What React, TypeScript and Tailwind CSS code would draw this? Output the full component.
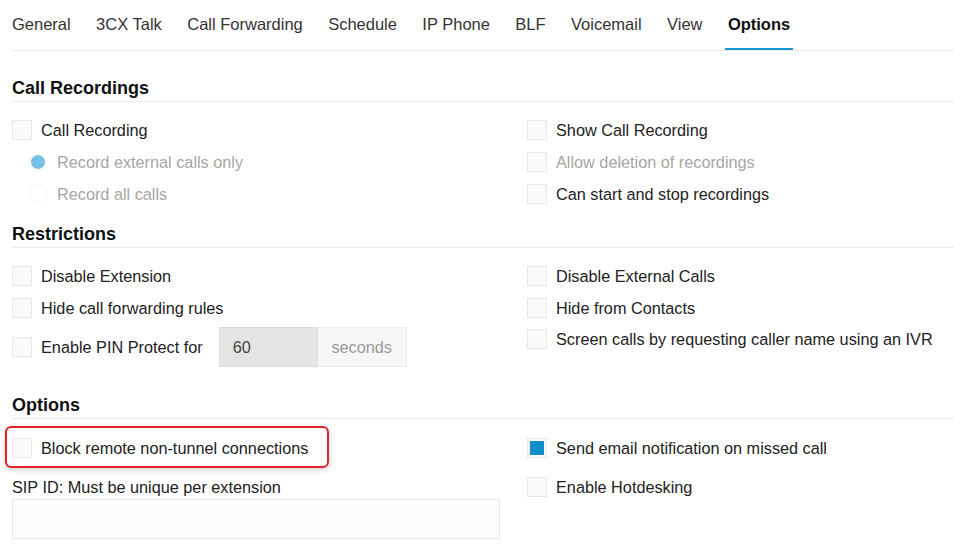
import React from 'react'

const tabs = ['General', '3CX Talk', 'Call Forwarding', 'Schedule', 'IP Phone', 'BLF', 'Voicemail', 'View', 'Options']

function Checkbox({ checked = false }: { checked?: boolean }) {
  return (
    <span className="flex h-5 w-5 shrink-0 items-center justify-center border border-[#e8e8e8] bg-[#fafafa]">
      {checked && <span className="h-[14px] w-[14px] bg-[#0f8fce]" />}
    </span>
  )
}

function CheckRow({
  label,
  checked,
  disabled,
  className = '',
}: {
  label: string
  checked?: boolean
  disabled?: boolean
  className?: string
}) {
  return (
    <label className={`flex h-8 items-center ${className}`}>
      <Checkbox checked={checked} />
      <span className={`ml-[9px] whitespace-nowrap ${disabled ? 'text-[#a6a6a6]' : 'text-[#222]'}`}>{label}</span>
    </label>
  )
}

function RadioRow({ label, checked }: { label: string; checked?: boolean }) {
  return (
    <label className="flex h-8 items-center pl-[17px]">
      <span className="flex h-[18px] w-[18px] items-center justify-center rounded-full border border-[#f3f3f3]">
        {checked && <span className="h-[14px] w-[14px] rounded-full bg-[#77c1e7]" />}
      </span>
      <span className="ml-[10px] whitespace-nowrap text-[#a6a6a6]">{label}</span>
    </label>
  )
}

function Heading({ title, className = '' }: { title: string; className?: string }) {
  return (
    <div className={`flex h-[26px] items-center border-b border-[#ececec] pb-px ${className}`}>
      <h2 className="text-[18px] font-bold leading-6 text-[#111]">{title}</h2>
    </div>
  )
}

export default function App() {
  return (
    <div
      className="h-[549px] w-[954px] overflow-hidden bg-white pl-3 text-[16.25px] text-[#222]"
      style={{ fontFamily: '"Liberation Sans", Arial, sans-serif' }}
    >
      {/* Tabs */}
      <div className="flex h-[51px] items-stretch gap-[19.4px] border-b border-[#ececec] text-[16.5px]">
        {tabs.map((t, i) => {
          const active = t === 'Options'
          return (
            <div
              key={t}
              className={`flex h-[50px] items-center border-b-2 ${i === 0 ? 'pl-0 pr-[3px]' : 'px-[3px]'} ${
                active ? 'border-[#1b95d3] font-bold text-[#111]' : 'border-transparent text-[#333]'
              }`}
            >
              {t}
            </div>
          )
        })}
      </div>

      {/* Call Recordings */}
      <Heading title="Call Recordings" className="mt-[25px]" />
      <div className="mt-[12px] grid grid-cols-[515px_1fr]">
        <div>
          <CheckRow label="Call Recording" />
          <RadioRow label="Record external calls only" checked />
          <RadioRow label="Record all calls" />
        </div>
        <div>
          <CheckRow label="Show Call Recording" />
          <CheckRow label="Allow deletion of recordings" disabled />
          <CheckRow label="Can start and stop recordings" />
        </div>
      </div>

      {/* Restrictions */}
      <Heading title="Restrictions" className="mt-[12px]" />
      <div className="mt-[12px] grid grid-cols-[515px_1fr]">
        <div>
          <CheckRow label="Disable Extension" />
          <CheckRow label="Hide call forwarding rules" />
          <div className="mt-[3px] flex h-10 items-center">
            <Checkbox />
            <span className="ml-[9px] whitespace-nowrap">Enable PIN Protect for</span>
            <div className="ml-4 flex h-10">
              <div className="flex w-[99px] items-center border border-[#dcdcdc] bg-[#e4e4e4] pl-[13px] text-[#444]">60</div>
              <div className="flex w-[89px] items-center justify-center border border-l-0 border-[#ededed] bg-[#f7f7f7] text-[#9a9a9a]">
                seconds
              </div>
            </div>
          </div>
        </div>
        <div>
          <CheckRow label="Disable External Calls" />
          <CheckRow label="Hide from Contacts" />
          <CheckRow label="Screen calls by requesting caller name using an IVR" className="-mt-px" />
        </div>
      </div>

      {/* Options */}
      <Heading title="Options" className="mt-[26px]" />
      <div className="mt-[13px] grid grid-cols-[515px_1fr]">
        <div>
          <div className="relative">
            <CheckRow label="Block remote non-tunnel connections" />
            <div className="pointer-events-none absolute left-[-7px] top-[-6px] h-[42px] w-[324px] rounded-md border-2 border-[#e3202b] shadow-[0_2px_6px_rgba(0,0,0,0.18)]" />
          </div>
          <div className="mt-[13px] h-5 leading-5">SIP ID: Must be unique per extension</div>
          <div className="mt-[2px] h-10 w-[488px] border border-[#e8e8e8] bg-[#fcfcfc]" />
        </div>
        <div>
          <CheckRow label="Send email notification on missed call" checked />
          <CheckRow label="Enable Hotdesking" className="mt-[7px]" />
        </div>
      </div>
    </div>
  )
}
